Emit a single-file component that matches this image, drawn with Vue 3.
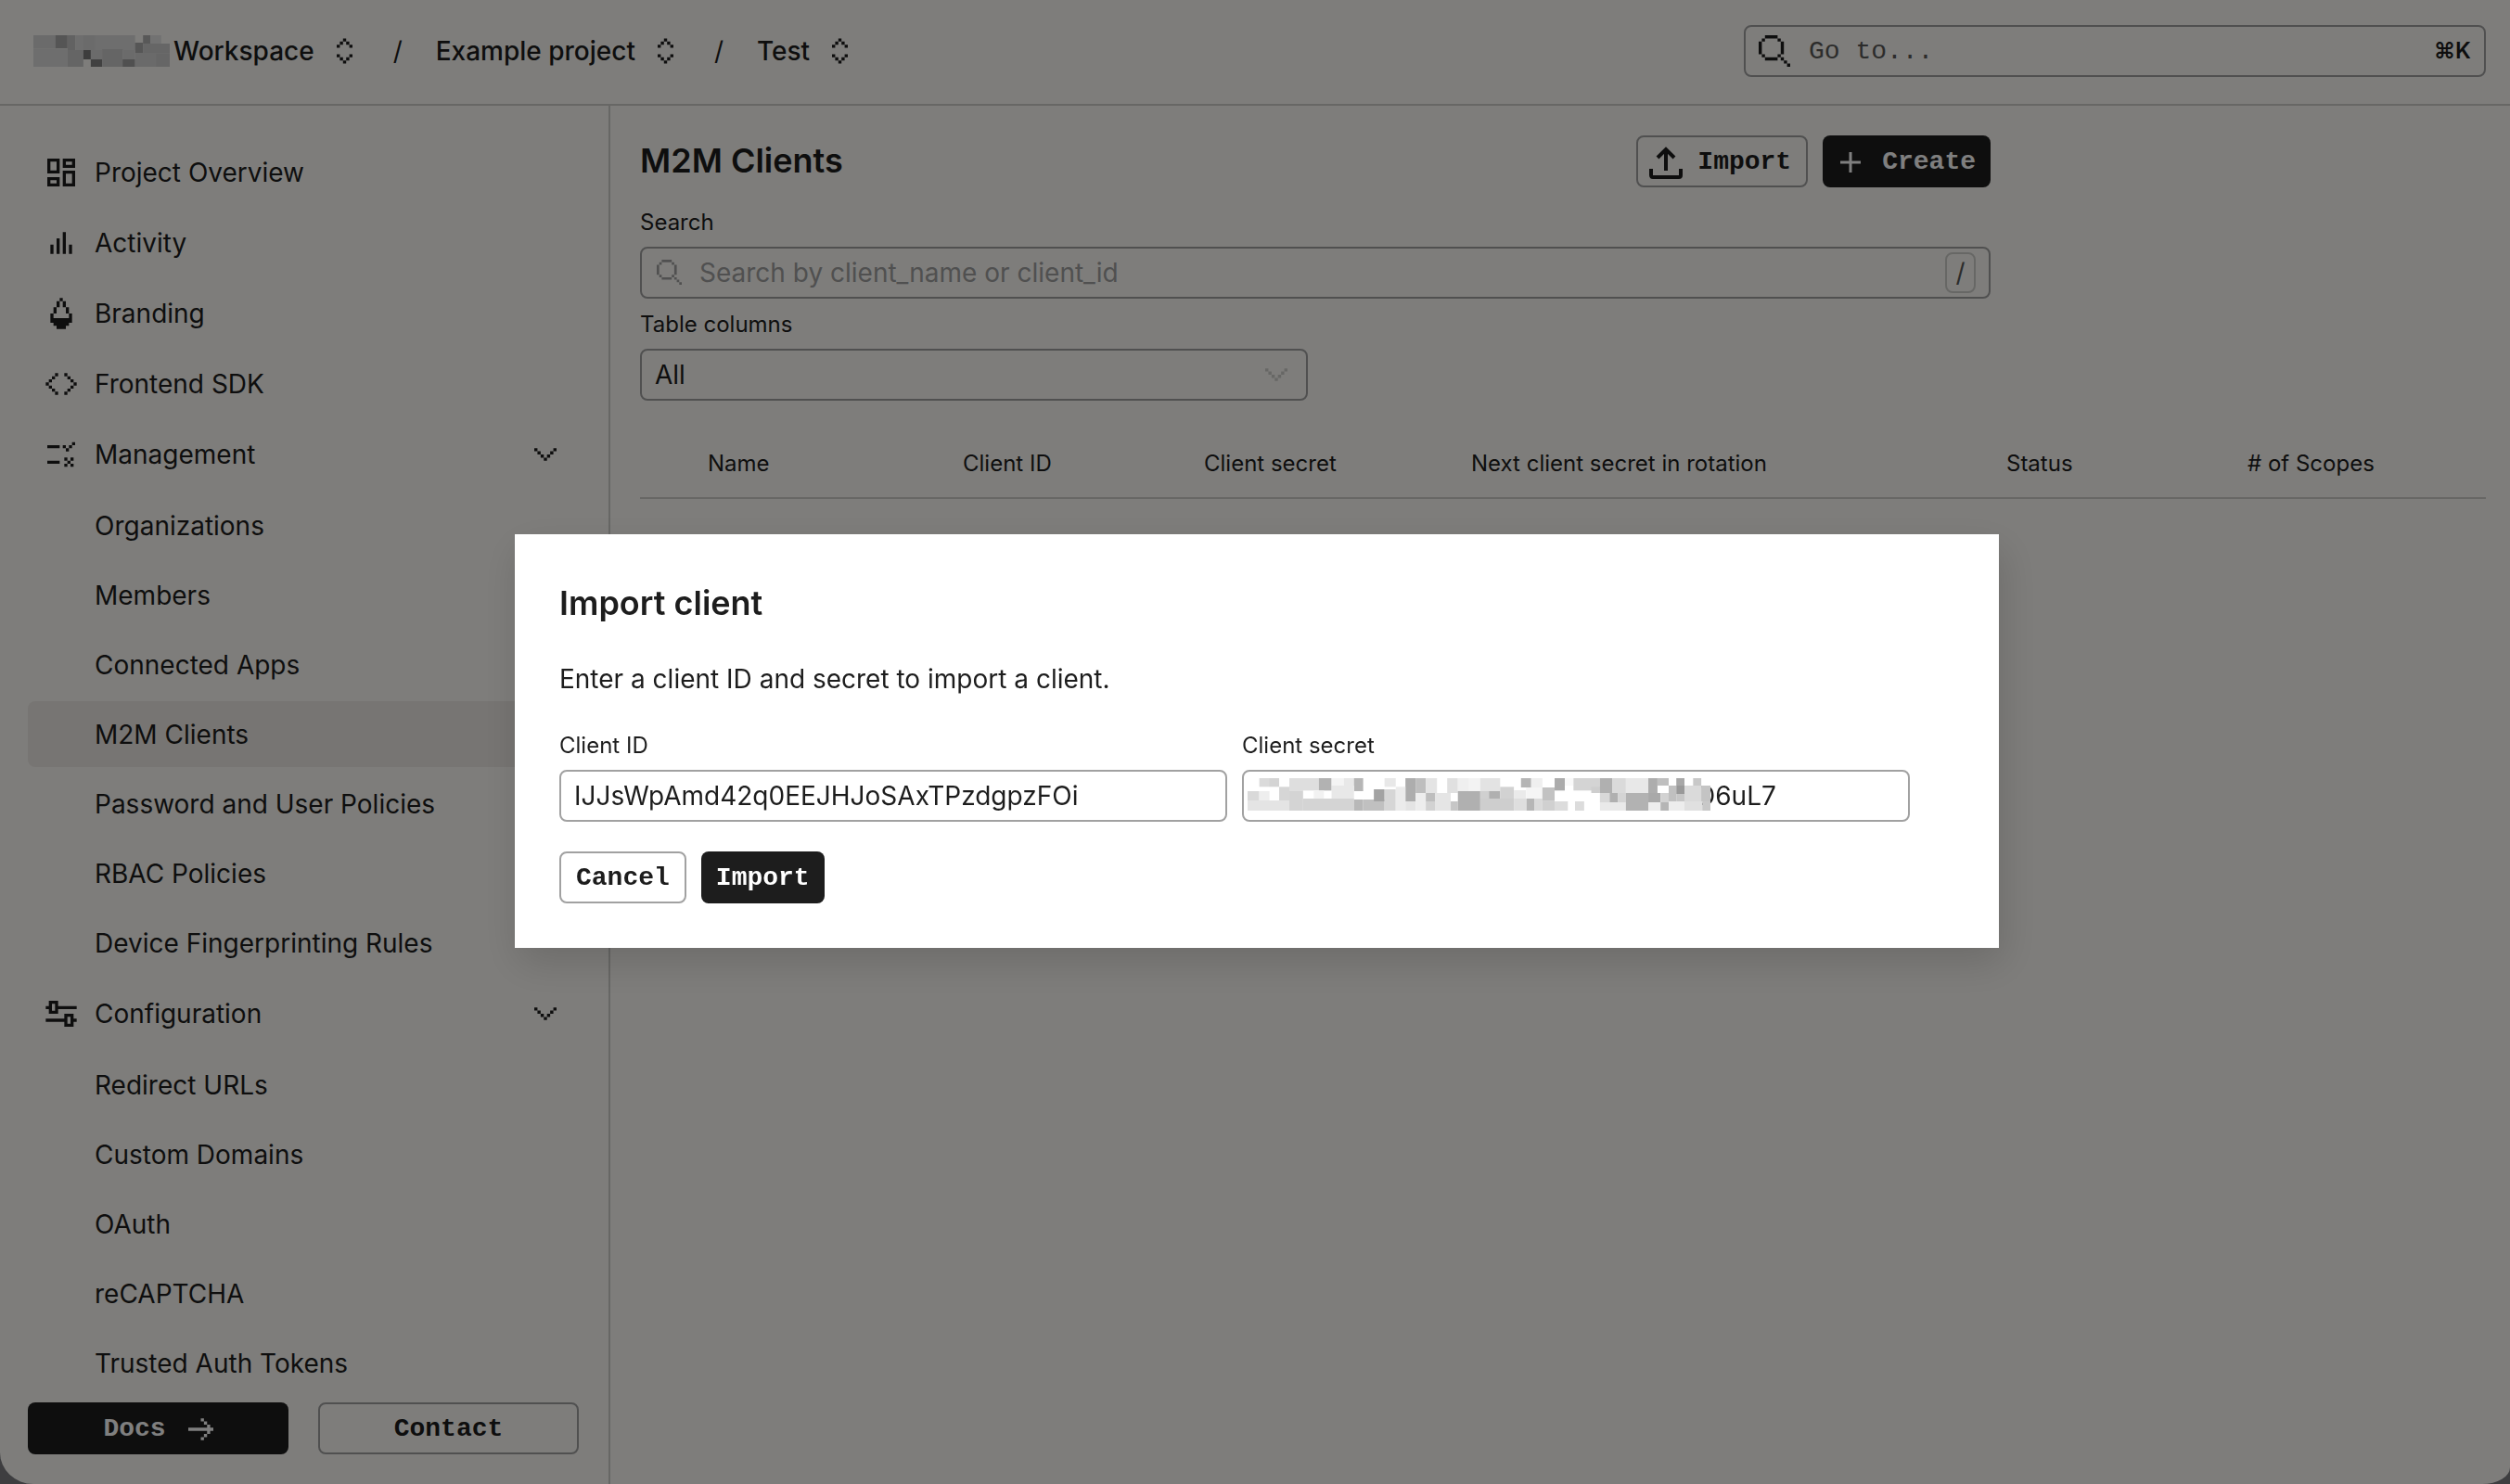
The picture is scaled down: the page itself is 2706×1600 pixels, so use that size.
<script setup>
import { ref } from "vue";

// turns rows of "#" into one path, a unit square for each "#"
function pixels(rows, x = 0, y = 0) {
  let d = "";
  rows.forEach((row, r) => {
    [...row].forEach((cell, c) => {
      if (cell === "#") d += `M${x + c} ${y + r}h1v1h-1z`;
    });
  });
  return d;
}

const searchIcon = pixels([
  "..####....",
  ".#....#...",
  "#......#..",
  "#......#..",
  "#......#..",
  "#......#..",
  ".#....#...",
  "..####.#..",
  "........#.",
  ".........#",
]);
const chevron = pixels(["#.....#", ".#...#.", "..#.#..", "...#..."]);
const selector = pixels([
  "..#..",
  ".#.#.",
  "#...#",
  ".....",
  ".....",
  "#...#",
  ".#.#.",
  "..#..",
]);
const arrow = pixels([
  "....#...",
  ".....#..",
  "......#.",
  "########",
  "......#.",
  ".....#..",
  "....#...",
]);

// nav icons sit on a 12 x 12 grid
const icons = {
  overview:
    "M1.5 1.5h4v4.8h-4zm1 1v2.8h2v-2.8zM1.5 7.5h4v3h-4zm1 1v1h2v-1zM6.5 1.5h4v3h-4zm1 1v1h2v-1zM6.5 5.4h4v5.1h-4zm1 1v3.1h2v-3.1z",
  activity:
    "M2.5 6.5h1v3h-1zM4.5 4.5h1v5h-1zM6.5 2.5h1v7h-1zM8.5 6.5h1v3h-1z",
  branding:
    pixels(
      [
        "...#...",
        "..#.#..",
        "..#.#..",
        ".#...#.",
        ".#...#.",
        "#.....#",
        "#.....#",
        "#######",
        ".#####.",
        "..###..",
      ],
      2.5,
      1
    ) + "M3.5 7.5h5v.5h-5z",
  sdk: pixels(
    [
      "...#..#...",
      "..#....#..",
      ".#......#.",
      "#........#",
      ".#......#.",
      "..#....#..",
      "...#..#...",
    ],
    1,
    2.5
  ),
  management:
    pixels(["........#", "####.#.#.", "......#..", "", "", "", "####"], 1.5, 2) +
    pixels(["#.#", ".#.", "#.#"], 7, 7),
  configuration:
    "M1 3.5h1v-1.7h3v1.7h6v1h-6v1.5h-3v-1.5h-1zM3 2.8v2.2h1v-2.2zM1 7.6h6v-1.6h3v1.6h1v1h-1v1.6h-3v-1.6h-6zM8 7v2.2h1v-2.2z",
};

const crumbs = ["Workspace", "Example project", "Test"];

const nav = ref([
  { label: "Project Overview", icon: "overview" },
  { label: "Activity", icon: "activity" },
  { label: "Branding", icon: "branding" },
  { label: "Frontend SDK", icon: "sdk" },
  {
    label: "Management",
    icon: "management",
    open: true,
    children: [
      "Organizations",
      "Members",
      "Connected Apps",
      "M2M Clients",
      "Password and User Policies",
      "RBAC Policies",
      "Device Fingerprinting Rules",
    ],
  },
  {
    label: "Configuration",
    icon: "configuration",
    open: true,
    children: [
      "Redirect URLs",
      "Custom Domains",
      "OAuth",
      "reCAPTCHA",
      "Trusted Auth Tokens",
    ],
  },
]);
const active = ref("M2M Clients");

const columns = [
  { label: "", cls: "col-check" },
  { label: "Name", cls: "col-name" },
  { label: "Client ID", cls: "col-id" },
  { label: "Client secret", cls: "col-secret" },
  { label: "Next client secret in rotation", cls: "col-next" },
  { label: "Status", cls: "col-status" },
  { label: "# of Scopes", cls: "col-scopes" },
];

const search = ref("");
const shownColumns = ref("All");
const showModal = ref(true);
const clientId = ref("IJJsWpAmd42q0EEJHJoSAxTPzdgpzFOi");
const clientSecret = ref("D6uL7");

// x, y, width, height, grey level
const nameMask = [
  [0, 0, 40, 43, "d6"], [39, 0, 21, 42, "aa"], [60, 0, 14, 48, "c4"],
  [74, 0, 105, 48, "dc"], [88, 0, 20, 48, "d6"], [193, 0, 13, 27, "b0"],
  [206, 0, 19, 27, "e4"], [179, 24, 14, 33, "ac"], [193, 27, 47, 40, "cc"],
  [0, 43, 60, 59, "dc"], [60, 48, 28, 54, "cb"], [101, 48, 20, 30, "d6"],
  [88, 48, 13, 30, "7a"], [101, 78, 20, 24, "82"], [121, 45, 36, 57, "cb"],
  [157, 78, 22, 24, "a0"], [157, 48, 22, 30, "d6"], [179, 57, 61, 45, "d4"],
  [216, 60, 24, 42, "cc"],
];
const secretMask = [
  [23, 0, 19, 28, "da"], [42, 0, 20, 28, "d4"], [82, 0, 58, 40, "de"],
  [140, 0, 25, 40, "b2"], [165, 0, 24, 24, "f4"], [189, 0, 20, 24, "e8"],
  [209, 0, 18, 42, "b6"], [269, 0, 22, 28, "e8"], [310, 0, 20, 75, "ad"],
  [330, 0, 20, 48, "be"], [350, 0, 22, 48, "e4"], [392, 0, 21, 48, "e0"],
  [413, 0, 22, 42, "ef"], [435, 0, 22, 42, "f3"], [457, 0, 39, 42, "e3"],
  [537, 0, 20, 30, "b5"], [557, 0, 22, 30, "ef"], [603, 0, 20, 40, "ab"],
  [623, 0, 17, 24, "f9"], [640, 0, 52, 40, "d4"], [675, 28, 17, 20, "ce"],
  [692, 0, 24, 48, "b0"], [716, 0, 27, 48, "da"], [743, 0, 44, 48, "e8"],
  [787, 0, 18, 48, "ad"], [805, 0, 22, 24, "bf"], [842, 0, 16, 24, "a8"],
  [875, 0, 16, 24, "c8"], [0, 42, 23, 30, "d9"], [23, 42, 20, 30, "ee"],
  [0, 72, 82, 33, "e4"], [62, 28, 20, 44, "d6"], [82, 40, 27, 65, "d4"],
  [130, 40, 20, 26, "f2"], [165, 24, 44, 45, "e8"], [109, 66, 100, 39, "d4"],
  [209, 69, 18, 36, "b8"], [227, 69, 42, 36, "c0"], [248, 36, 21, 39, "a3"],
  [269, 36, 22, 69, "d6"], [291, 28, 19, 77, "eb"], [310, 75, 20, 30, "e4"],
  [330, 48, 20, 57, "ed"], [350, 48, 18, 27, "be"], [350, 75, 18, 30, "d2"],
  [368, 48, 31, 57, "e5"], [399, 75, 14, 30, "c6"], [413, 42, 44, 63, "b0"],
  [457, 42, 17, 24, "d0"], [474, 42, 22, 24, "b0"], [496, 28, 27, 38, "d2"],
  [457, 66, 66, 39, "ce"], [523, 39, 24, 27, "ea"], [523, 66, 25, 39, "de"],
  [547, 30, 32, 36, "f5"], [548, 66, 15, 39, "b6"], [563, 66, 16, 39, "da"],
  [579, 30, 24, 44, "c2"], [579, 74, 24, 31, "d0"], [603, 75, 26, 30, "dc"],
  [643, 75, 18, 30, "dc"], [692, 48, 19, 30, "d8"], [692, 78, 51, 27, "e9"],
  [711, 48, 16, 30, "b0"], [727, 48, 16, 30, "d4"], [743, 48, 44, 57, "b2"],
  [787, 48, 24, 30, "a9"], [787, 78, 24, 27, "ed"], [811, 48, 16, 30, "d2"],
  [811, 78, 16, 27, "b5"], [827, 24, 15, 51, "c0"], [842, 24, 16, 27, "99"],
  [842, 51, 16, 24, "c6"], [858, 24, 34, 51, "da"], [891, 24, 18, 51, "c4"],
  [827, 75, 31, 30, "ed"], [858, 75, 35, 30, "e0"], [893, 75, 16, 30, "c8"],
];
</script>

<template>
  <div class="app">
    <header class="topbar">
      <nav class="crumbs" aria-label="Breadcrumb">
        <svg class="name-mask" viewBox="0 0 240 102" preserveAspectRatio="none" aria-hidden="true">
          <rect
            v-for="(m, i) in nameMask"
            :key="i"
            :x="m[0]"
            :y="m[1]"
            :width="m[2]"
            :height="m[3]"
            :fill="'#' + m[4] + m[4] + m[4]"
          />
        </svg>
        <template v-for="(crumb, i) in crumbs" :key="crumb">
          <span v-if="i > 0" class="slash">/</span>
          <button class="crumb" type="button">
            {{ crumb }}
            <svg class="selector" viewBox="0 0 5 8" aria-hidden="true"><path :d="selector" /></svg>
          </button>
        </template>
      </nav>
      <button class="goto" type="button">
        <svg class="goto-icon" viewBox="0 0 10 10" aria-hidden="true"><path :d="searchIcon" /></svg>
        <span class="goto-text">Go to...</span>
        <span class="goto-key">⌘K</span>
      </button>
    </header>

    <div class="body">
      <aside class="sidebar">
        <ul class="nav">
          <li v-for="item in nav" :key="item.label">
            <button v-if="item.children" class="nav-item" type="button" @click="item.open = !item.open">
              <svg class="nav-icon" viewBox="0 0 12 12" aria-hidden="true">
                <path fill-rule="evenodd" :d="icons[item.icon]" />
              </svg>
              <span class="nav-label">{{ item.label }}</span>
              <svg class="chevron" viewBox="0 0 7 4" aria-hidden="true"><path :d="chevron" /></svg>
            </button>
            <a v-else class="nav-item" href="#">
              <svg class="nav-icon" viewBox="0 0 12 12" aria-hidden="true">
                <path fill-rule="evenodd" :d="icons[item.icon]" />
              </svg>
              <span class="nav-label">{{ item.label }}</span>
            </a>
            <ul v-if="item.children && item.open" class="sub">
              <li v-for="child in item.children" :key="child">
                <a class="sub-item" :class="{ active: child === active }" href="#" @click.prevent="active = child">{{ child }}</a>
              </li>
            </ul>
          </li>
        </ul>
        <div class="side-actions">
          <a class="btn dark" href="#">
            Docs
            <svg class="arrow" viewBox="0 0 8 7" aria-hidden="true"><path :d="arrow" /></svg>
          </a>
          <a class="btn light" href="#">Contact</a>
        </div>
      </aside>

      <main class="main">
        <div class="panel">
          <div class="title-row">
            <h1>M2M Clients</h1>
            <div class="title-actions">
              <button class="btn light with-icon" type="button" @click="showModal = true">
                <svg class="btn-icon" viewBox="0 0 36 36" fill="none" stroke="currentColor" stroke-width="4" aria-hidden="true">
                  <path d="M18 27V4M9 13l9-9 9 9" />
                  <path d="M2 25v7q0 2 2 2h28q2 0 2-2v-7" />
                </svg>
                Import
              </button>
              <button class="btn dark with-icon" type="button">
                <svg class="btn-icon" viewBox="0 0 36 36" fill="none" stroke="currentColor" stroke-width="3" aria-hidden="true">
                  <path d="M18 7v22M7 18h22" />
                </svg>
                Create
              </button>
            </div>
          </div>
          <div class="field">
            <label for="search">Search</label>
            <div class="control">
              <svg class="search-icon" viewBox="0 0 10 10" aria-hidden="true"><path :d="searchIcon" /></svg>
              <input id="search" v-model="search" class="search-input" type="text" placeholder="Search by client_name or client_id" />
              <kbd class="key">/</kbd>
            </div>
          </div>
          <div class="field half">
            <label for="columns">Table columns</label>
            <div class="control">
              <select id="columns" v-model="shownColumns">
                <option>All</option>
              </select>
              <svg class="select-chevron" viewBox="0 0 7 4" aria-hidden="true"><path :d="chevron" /></svg>
            </div>
          </div>
        </div>
        <table>
          <thead>
            <tr>
              <th v-for="col in columns" :key="col.cls" :class="col.cls" scope="col">{{ col.label }}</th>
            </tr>
          </thead>
        </table>
      </main>
    </div>
  </div>

  <div v-if="showModal" class="overlay">
    <form class="modal" role="dialog" aria-labelledby="modal-title" @submit.prevent="showModal = false">
      <h2 id="modal-title">Import client</h2>
      <p>Enter a client ID and secret to import a client.</p>
      <div class="modal-fields">
        <div class="field">
          <label for="client-id">Client ID</label>
          <div class="control">
            <input id="client-id" v-model="clientId" type="text" />
          </div>
        </div>
        <div class="field">
          <label for="client-secret">Client secret</label>
          <div class="control">
            <input id="client-secret" v-model="clientSecret" class="secret-input" type="text" />
            <svg class="secret-mask" viewBox="0 0 909 105" preserveAspectRatio="none" aria-hidden="true">
              <rect
                v-for="(m, i) in secretMask"
                :key="i"
                :x="m[0]"
                :y="m[1]"
                :width="m[2]"
                :height="m[3]"
                :fill="'#' + m[4] + m[4] + m[4]"
              />
            </svg>
          </div>
        </div>
      </div>
      <div class="modal-actions">
        <button class="btn light" type="button" @click="showModal = false">Cancel</button>
        <button class="btn dark" type="submit">Import</button>
      </div>
    </form>
  </div>
</template>

<style>
body {
  background: #7c7c80;
}
</style>

<style scoped>
* {
  box-sizing: border-box;
}

.app,
.overlay {
  font-family: Inter, "Liberation Sans", sans-serif;
  font-size: 28px;
  line-height: 44px;
  color: #1d1d1d;
}

.app {
  display: flex;
  flex-direction: column;
  height: 100vh;
  overflow: hidden;
  background: #fcfbf7;
  border-radius: 0 0 30px 36px / 0 0 18px 34px;
}

button,
input,
select {
  font: inherit;
  color: inherit;
}

button {
  background: none;
  border: 0;
  padding: 0;
  cursor: pointer;
}

svg {
  display: block;
  flex: none;
  fill: currentColor;
}

svg[fill="none"] {
  fill: none;
}

a {
  color: inherit;
  text-decoration: none;
}

ul {
  list-style: none;
  margin: 0;
  padding: 0;
}

.topbar {
  display: flex;
  align-items: center;
  justify-content: space-between;
  flex: none;
  height: 114px;
  padding: 0 26px 2px 36px;
  border-bottom: 2px solid #cfcfcb;
}

.crumbs {
  display: flex;
  align-items: center;
}

.name-mask {
  width: 147px;
  height: 34px;
  margin-right: 4px;
}

.crumb {
  display: flex;
  align-items: center;
  gap: 24px;
  font-weight: 500;
}

.selector {
  width: 17px;
  height: 28px;
}

.slash {
  width: 90px;
  padding-left: 8px;
  text-align: center;
}

.goto {
  display: flex;
  align-items: center;
  gap: 20px;
  width: 800px;
  height: 56px;
  padding: 0 14px;
  border: 2px solid #a1a1a1;
  border-radius: 8px;
}

.goto-icon {
  width: 34px;
  height: 34px;
}

.goto-text {
  flex: 1;
  padding-top: 2px;
  font-family: "Liberation Mono", monospace;
  text-align: left;
  color: #595957;
}

.goto-key {
  font-size: 24px;
  font-weight: 600;
}

.body {
  display: flex;
  flex: 1;
  min-height: 0;
}

.sidebar {
  display: flex;
  flex-direction: column;
  flex: none;
  width: 658px;
  padding: 36px 32px 32px 30px;
  border-right: 2px solid #cfcfcb;
}

.nav {
  flex: 1;
  min-height: 0;
  overflow: hidden;
}

.nav-item {
  display: flex;
  align-items: center;
  gap: 16px;
  width: 100%;
  height: 72px;
  margin-bottom: 4px;
  padding: 0 24px 0 16px;
  text-align: left;
}

.nav-icon {
  width: 40px;
  height: 40px;
}

.nav-label {
  flex: 1;
}

.chevron {
  width: 24px;
  height: 14px;
}

.sub {
  padding: 1px 0;
}

.sub-item {
  display: flex;
  align-items: center;
  height: 71px;
  margin-bottom: 4px;
  padding-left: 72px;
  border-radius: 8px;
}

.sub-item.active {
  background: #efebe6;
}

.side-actions {
  display: grid;
  grid-template-columns: 1fr 1fr;
  gap: 32px;
}

.btn {
  display: flex;
  align-items: center;
  justify-content: center;
  height: 56px;
  padding: 2px 16px 0;
  border-radius: 8px;
  font-family: "Liberation Mono", monospace;
  font-weight: 700;
}

.btn.dark {
  background: #1d1d1d;
  color: #fff;
}

.btn.light {
  border: 2px solid #a1a1a1;
}

.btn.with-icon {
  gap: 16px;
  padding-left: 12px;
}

.btn-icon {
  width: 36px;
  height: 36px;
}

.arrow {
  width: 27px;
  height: 24px;
  margin-left: 24px;
}

.main {
  flex: 1;
  min-width: 0;
  padding: 32px 26px 0 32px;
}

.panel {
  max-width: 1456px;
}

.title-row {
  display: flex;
  align-items: center;
  justify-content: space-between;
  margin-bottom: 20px;
}

h1,
h2 {
  margin: 0;
  font-size: 36px;
  line-height: 52px;
  font-weight: 600;
}

h1 {
  padding-bottom: 2px;
}

.title-actions {
  display: flex;
  gap: 16px;
}

.field + .field {
  margin-top: 10px;
}

.field label {
  display: block;
  margin-bottom: 8px;
  font-size: 24px;
  line-height: 36px;
}

.half {
  max-width: 720px;
}

.control {
  position: relative;
}

input,
select {
  display: block;
  width: 100%;
  height: 56px;
  padding: 0 14px;
  background: transparent;
  border: 2px solid #a1a1a1;
  border-radius: 8px;
  outline: none;
  appearance: none;
}

input::placeholder {
  color: #a1a1a1;
  opacity: 1;
}

.search-input {
  padding: 0 64px 0 62px;
}

.search-icon {
  position: absolute;
  top: 14px;
  left: 18px;
  width: 27px;
  height: 27px;
  color: #a1a1a1;
}

.key {
  position: absolute;
  top: 6px;
  right: 16px;
  width: 33px;
  height: 44px;
  border: 2px solid #cfcfcb;
  border-radius: 8px;
  font-family: inherit;
  line-height: 40px;
  text-align: center;
  color: #595957;
}

.select-chevron {
  position: absolute;
  top: 21px;
  right: 22px;
  width: 24px;
  height: 14px;
  color: #cfcfcb;
  pointer-events: none;
}

table {
  width: 100%;
  margin-top: 28px;
  border-collapse: collapse;
  table-layout: fixed;
}

th {
  padding: 22px 16px 18px;
  border-bottom: 2px solid #cfcfcb;
  font-size: 24px;
  line-height: 36px;
  font-weight: 400;
  text-align: left;
  white-space: nowrap;
}

.col-check {
  width: 57px;
}

.col-name {
  width: 275px;
}

.col-id,
.col-status {
  width: 260px;
}

.col-secret {
  width: 288px;
}

.col-scopes {
  width: 273px;
}

.overlay {
  position: fixed;
  inset: 0;
  display: flex;
  align-items: center;
  justify-content: center;
  padding: 0 0 2px 4px;
  background: rgba(0, 0, 0, 0.5);
}

.modal {
  width: 1600px;
  max-width: 100%;
  padding: 48px;
  background: #fff;
  box-shadow: 4px 16px 40px rgba(0, 0, 0, 0.14);
}

.modal p {
  margin: 34px 0 32px;
}

.modal-fields {
  display: grid;
  grid-template-columns: repeat(2, minmax(0, 720px));
  gap: 16px;
}

.modal-fields .field {
  margin: 0;
}

.secret-input {
  padding-left: 488px;
}

.secret-mask {
  position: absolute;
  top: 9px;
  left: 6px;
  width: 499px;
  height: 35px;
}

.modal-actions {
  display: flex;
  gap: 16px;
  margin-top: 32px;
}
</style>
